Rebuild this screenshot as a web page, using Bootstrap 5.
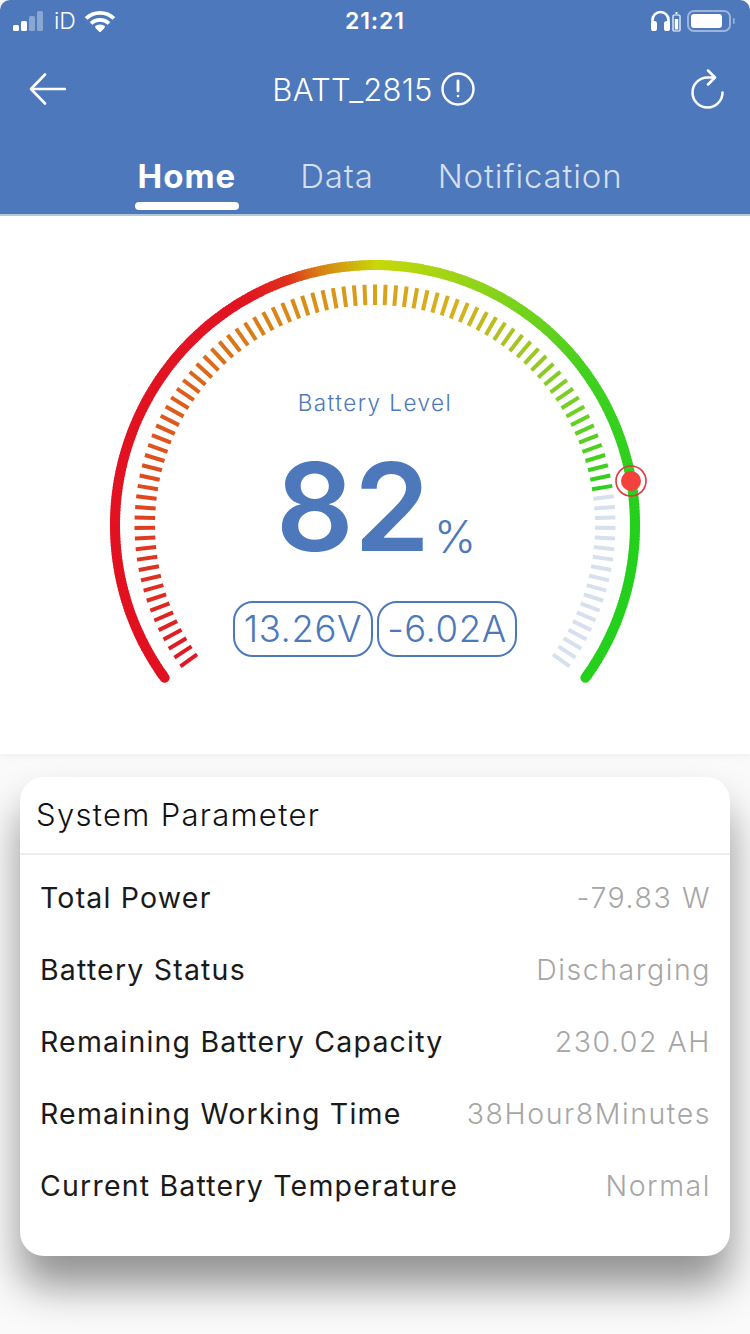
<!DOCTYPE html>
<html lang="en">
<head>
<meta charset="utf-8">
<title>BATT_2815</title>
<link href="https://cdn.jsdelivr.net/npm/bootstrap@5.3.0/dist/css/bootstrap.min.css" rel="stylesheet">
<style>
html,body{margin:0;height:1334px;overflow:hidden}
body{font-family:Inter,"Liberation Sans",sans-serif;background:#fafafa}
.app-head{background:#4d78bb;height:216px;border-bottom:2px solid #b4cbd9;color:#fff;border-radius:10px 10px 0 0}
.status-row{height:40px;padding:2px 12px 0;font-size:21px}
.status-time{font-weight:600;font-size:23px;letter-spacing:.9px;width:100px;text-align:center}
.status-side{width:200px}
.id-text{font-size:23px;font-weight:300}
.title-row{height:98px;padding:0 23px 0 28px}
.title-group{margin-right:10px}
.title-text{font-size:31px;line-height:1;font-weight:300;letter-spacing:.2px}
.tab-row{height:76px;gap:64px;padding-left:10px}
.tab-item{font-size:33px;line-height:36px;color:#d4deed;letter-spacing:.85px;font-weight:300;position:relative;padding-top:20px}
.tab-item.on{color:#fff;font-weight:700;letter-spacing:1px}
.tab-item.on::after{content:"";position:absolute;left:-3px;right:-3px;top:64px;height:8px;border-radius:4px;background:#fff}
.gauge-panel{background:#fff;height:538px;position:relative;box-shadow:0 2px 8px rgba(0,0,0,.05)}
.gauge-svg{display:block}
.gauge-over{position:absolute;left:0;right:0;top:172px;color:#4d78bb}
.gauge-cap{font-size:22.5px;letter-spacing:1.45px;line-height:30px;font-weight:300}
.gauge-num{font-size:122px;font-weight:600;line-height:1;margin-top:28px;height:122px;padding-left:2px}
.gauge-pct{font-size:45px;font-weight:300;line-height:1;margin-left:4px;margin-bottom:9px}
.gauge-pills{gap:4px;margin-top:33px}
.gauge-pill{border:2px solid #4d78bb;border-radius:20px;height:56px;width:140px;font-size:36.5px;font-weight:300;letter-spacing:.6px}
.param-wrap{padding:23px 20px 0}
.param-card{background:#fff;border-radius:24px;height:479px;box-shadow:0 30px 42px rgba(0,0,0,.42);overflow:hidden}
.param-top{height:78px;padding-left:16px;border-bottom:2px solid #ececec;font-size:31px;letter-spacing:1.3px;font-weight:300;color:#111}
.param-body{padding:7px 20px 0 20px}
.param-row{height:72px;font-size:28.5px;letter-spacing:1.2px;font-weight:400;color:#1a1a1a}
.param-val{color:#a6a6a6;font-weight:300;letter-spacing:1.55px;margin-right:-1px}
</style>
</head>
<body>
<header class="app-head">
  <div class="status-row d-flex align-items-center justify-content-between">
    <div class="status-side d-flex align-items-center gap-2">
      <svg width="34" height="22" viewBox="0 0 34 22" aria-hidden="true">
        <rect x="1" y="15" width="6" height="6" rx="1.5" fill="#fff"/>
        <rect x="9" y="11" width="6" height="10" rx="1.5" fill="#fff"/>
        <rect x="17" y="6" width="6" height="15" rx="1.5" fill="#8aa6d2"/>
        <rect x="25" y="1" width="6" height="20" rx="1.5" fill="#8aa6d2"/>
      </svg>
      <span class="id-text">iD</span>
      <svg width="32" height="22" viewBox="0 0 32 22" aria-hidden="true" fill="none" stroke="#fff" stroke-width="3.8">
        <path d="M2 8.500a20 20 0 0 1 28 0"/><path d="M7 13.500a13 13 0 0 1 18 0"/>
        <path d="M12 18a6 6 0 0 1 8 0"/><path d="M13 18.500l3 3 3-3z" fill="#fff" stroke-width="1.500"/>
      </svg>
    </div>
    <div class="status-time">21:21</div>
    <div class="status-side d-flex align-items-center justify-content-end gap-1">
      <svg width="32" height="24" viewBox="0 0 32 24" aria-hidden="true" fill="none">
        <path d="M2.500 18v-7a8 8 0 0 1 16 0v7" stroke="#fff" stroke-width="2.600"/>
        <rect x="1" y="12" width="6" height="10" rx="2.600" fill="#fff"/><rect x="14" y="12" width="6" height="10" rx="2.600" fill="#fff"/>
        <rect x="23" y="6" width="7" height="16" rx="1" stroke="#fff" stroke-width="1.200"/><rect x="24.800" y="10" width="3.400" height="10.500" fill="#fff"/><rect x="25.500" y="3" width="2" height="2" fill="#fff"/>
      </svg>
      <svg width="52" height="24" viewBox="0 0 52 24" aria-hidden="true">
        <rect x="2" y="2" width="42" height="20" rx="6" fill="none" stroke="#9db5da" stroke-width="2"/>
        <rect x="5" y="5" width="31" height="14" rx="3" fill="#fff"/>
        <rect x="47" y="9" width="1.600" height="6" rx=".8" fill="#9db5da"/>
      </svg>
    </div>
  </div>
  <div class="title-row d-flex align-items-center justify-content-between">
    <svg width="38" height="34" viewBox="0 0 38 34" aria-hidden="true" fill="none" stroke="#fff" stroke-width="2.600" stroke-linecap="round" stroke-linejoin="round"><path d="M3 17h34M17 2.500 3 17l14 14.500"/></svg>
    <div class="title-group d-flex align-items-center gap-2">
      <span class="title-text">BATT_2815</span>
      <svg width="34" height="34" viewBox="0 0 34 34" aria-hidden="true" fill="none" stroke="#fff" stroke-width="2.400"><circle cx="17" cy="17" r="15.500"/><path d="M17 9v10" stroke-width="2.800" stroke-linecap="round"/><circle cx="17" cy="24" r="1.300" fill="#fff" stroke="none"/></svg>
    </div>
    <svg width="36" height="40" viewBox="0 0 36 40" aria-hidden="true" fill="none" stroke="#fff" stroke-width="2.500" stroke-linecap="round" stroke-linejoin="round"><path d="M31.500 23.500a15 15 0 1 1-15-15h6"/><path d="M17 1.500l7 7-7 7"/></svg>
  </div>
  <nav class="tab-row d-flex justify-content-center">
    <span class="tab-item on">Home</span><span class="tab-item">Data</span><span class="tab-item">Notification</span>
  </nav>
</header>
<section class="gauge-panel">
  <svg id="gauge" class="gauge-svg" width="750" height="538" viewBox="0 216 750 538" aria-hidden="true"></svg>
  <div class="gauge-over d-flex flex-column align-items-center">
    <div class="gauge-cap">Battery Level</div>
    <div class="gauge-num d-flex align-items-end"><span>82</span><span class="gauge-pct">%</span></div>
    <div class="gauge-pills d-flex">
      <div class="gauge-pill d-flex align-items-center justify-content-center">13.26V</div>
      <div class="gauge-pill d-flex align-items-center justify-content-center">-6.02A</div>
    </div>
  </div>
</section>
<section class="param-wrap">
  <div class="param-card">
    <div class="param-top d-flex align-items-center">System Parameter</div>
    <div class="param-body">
      <div class="param-row d-flex align-items-center justify-content-between"><span>Total Power</span><span class="param-val">-79.83 W</span></div>
      <div class="param-row d-flex align-items-center justify-content-between"><span>Battery Status</span><span class="param-val">Discharging</span></div>
      <div class="param-row d-flex align-items-center justify-content-between"><span>Remaining Battery Capacity</span><span class="param-val">230.02 AH</span></div>
      <div class="param-row d-flex align-items-center justify-content-between"><span>Remaining Working Time</span><span class="param-val">38Hour8Minutes</span></div>
      <div class="param-row d-flex align-items-center justify-content-between"><span>Current Battery Temperature</span><span class="param-val">Normal</span></div>
    </div>
  </div>
</section>
<script src="https://cdn.jsdelivr.net/npm/bootstrap@5.3.0/dist/js/bootstrap.bundle.min.js"></script>
<script>
(function(){
  var cx=375,cy=525,NS='http://www.w3.org/2000/svg',svg=document.getElementById('gauge');
  function add(n,a){var e=document.createElementNS(NS,n);for(var k in a)e.setAttribute(k,a[k]);svg.appendChild(e);return e;}
  function lerp(stops,t){
    for(var i=1;i<stops.length;i++){if(t<=stops[i][0]){var a=stops[i-1],b=stops[i],u=(t-a[0])/(b[0]-a[0]);
      return 'rgb('+[1,2,3].map(function(j){return Math.round(a[j]+(b[j]-a[j])*u)}).join(',')+')';}}
    var l=stops[stops.length-1];return 'rgb('+l[1]+','+l[2]+','+l[3]+')';
  }
  function pt(deg,r){var a=deg*Math.PI/180;return [cx+r*Math.cos(a),cy-r*Math.sin(a)];}
  var arcStops=[[0,226,16,32],[.38,226,20,34],[.42,224,48,28],[.45,216,128,20],[.5,200,216,8],[.58,150,212,24],[.72,64,208,32],[.85,36,208,28],[1,36,208,28]];
  var tickStops=[[0,222,24,36],[.18,224,72,30],[.3,222,100,26],[.42,216,140,22],[.5,218,160,24],[.58,216,176,28],[.66,160,200,32],[.74,110,208,36],[.82,48,206,30],[1,48,206,30]];
  var N=360,sw=252,st=216;
  for(var i=0;i<N;i++){
    var a0=st-sw*i/N,a1=st-sw*(i+1.3)/N;if(a1<st-sw)a1=st-sw;
    var p=pt(a0,260),q=pt(a1,260);
    add('path',{d:'M'+p[0]+' '+p[1]+'A260 260 0 0 1 '+q[0]+' '+q[1],fill:'none',stroke:lerp(arcStops,i/N),'stroke-width':10,'stroke-linecap':(i==0||i==N-1)?'round':'butt'});
  }
  for(var t=0;t<=100;t++){
    var a=st-sw*t/100,o=pt(a,240.5),n=pt(a,220);
    add('line',{x1:o[0],y1:o[1],x2:n[0],y2:n[1],stroke:t<=82?lerp(tickStops,t/100):'#d6e1ed','stroke-width':4});
  }
  add('circle',{cx:631,cy:481,r:15,fill:'none',stroke:'#e0383e','stroke-width':1.600});
  add('circle',{cx:631,cy:481,r:10,fill:'#f5413c'});
})();
</script>
</body>
</html>
